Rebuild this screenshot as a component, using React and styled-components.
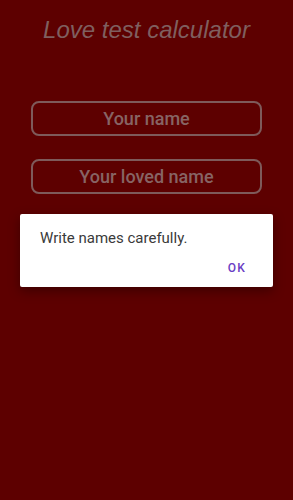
import React from 'react';
import styled, { createGlobalStyle } from 'styled-components';

const GlobalStyle = createGlobalStyle`
  html, body {
    margin: 0;
    padding: 0;
    background: #5d0000;
    font-family: Roboto, "Liberation Sans", sans-serif;
  }
`;

const Screen = styled.div`
  position: relative;
  width: 293px;
  height: 500px;
  background: #5d0000;
  overflow: hidden;
`;

const Title = styled.h1`
  margin: 0;
  padding-top: 15px;
  text-align: center;
  font-family: "Liberation Sans", Arial, sans-serif;
  font-style: italic;
  font-weight: normal;
  font-size: 24px;
  line-height: 30px;
  color: #7f5f5f;
`;

const Form = styled.div`
  display: flex;
  flex-direction: column;
  align-items: center;
  gap: 23px;
  margin-top: 56px;
`;

const NameInput = styled.input`
  box-sizing: border-box;
  width: 231px;
  height: 35px;
  border: 2px solid #7e5a5a;
  border-radius: 8px;
  background: transparent;
  text-align: center;
  font-family: Roboto, "Liberation Sans", sans-serif;
  font-size: 18px;
  font-weight: 500;
  color: #8a6666;
  outline: none;

  &::placeholder {
    color: #876464;
  }
`;

const Dialog = styled.div`
  position: absolute;
  left: 20px;
  top: 214px;
  width: 253px;
  box-sizing: border-box;
  background: #ffffff;
  border-radius: 2px;
  box-shadow: 0 4px 12px rgba(0, 0, 0, 0.35);
  padding: 14px 20px 11px 20px;
`;

const Message = styled.p`
  margin: 0;
  font-size: 15px;
  line-height: 20px;
  color: #3a3a3a;
`;

const Actions = styled.div`
  display: flex;
  justify-content: flex-end;
  margin-top: 12px;
`;

const TextButton = styled.button`
  border: none;
  background: none;
  padding: 0 7px 0 0;
  font-family: Roboto, "Liberation Sans", sans-serif;
  font-weight: 500;
  font-size: 12px;
  letter-spacing: 1.2px;
  color: #6a3dc4;
  line-height: 16px;
`;

export default function App() {
  return (
    <>
      <GlobalStyle />
      <Screen>
        <Title>Love test calculator</Title>
        <Form>
          <NameInput placeholder="Your name" />
          <NameInput placeholder="Your loved name" />
        </Form>
        <Dialog>
          <Message>Write names carefully.</Message>
          <Actions>
            <TextButton>OK</TextButton>
          </Actions>
        </Dialog>
      </Screen>
    </>
  );
}
